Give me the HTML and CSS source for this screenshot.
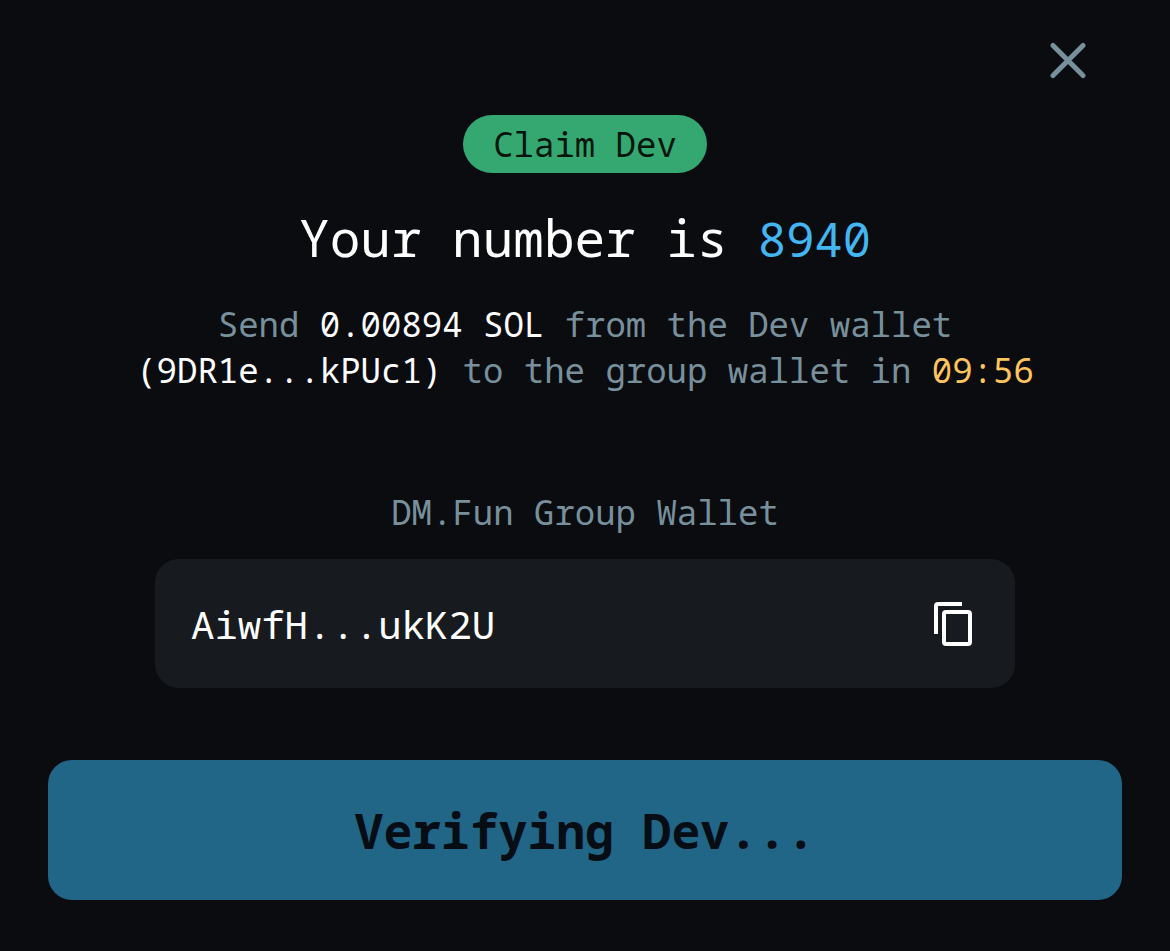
FILE: index.html
```html
<!DOCTYPE html>
<html lang="en">
<head>
  <meta charset="UTF-8">
  <meta name="viewport" content="width=device-width, initial-scale=1.0">
  <title>Claim Dev</title>
  <link rel="stylesheet" href="styles.css">
</head>
<body>

  <main class="modal">

    <!-- Close -->
    <header class="modal-header">
      <button type="button" class="icon-button" aria-label="Close">
        <svg class="close-icon" viewBox="0 0 38 38" fill="none" stroke="currentColor" stroke-width="5" stroke-linecap="round">
          <path d="M4 3.5 34 33.5M34 3.5 4 33.5"/>
        </svg>
      </button>
    </header>

    <!-- Claim info -->
    <section class="claim">
      <span class="badge">Claim Dev</span>
      <h1>Your number is <span class="number">8940</span></h1>
      <p class="instructions">
        Send <span class="strong">0.00894 SOL</span> from the Dev wallet
        <span class="strong">(9DR1e...kPUc1)</span> to the group wallet in <time class="timer">09:56</time>
      </p>
    </section>

    <!-- Group wallet -->
    <section class="wallet">
      <h2>DM.Fun Group Wallet</h2>
      <div class="wallet-box">
        <span class="address">AiwfH...ukK2U</span>
        <button type="button" class="icon-button copy" aria-label="Copy address">
          <svg class="copy-icon" viewBox="0 0 40 46" fill="none" stroke="currentColor" stroke-width="4">
            <path d="M3 33V5q0-2 2-2H29"/>
            <rect x="11" y="11" width="26" height="32" rx="2"/>
          </svg>
        </button>
      </div>
    </section>

    <button type="button" class="verify-button">Verifying Dev...</button>

  </main>

</body>
</html>
```

FILE: styles.css
```css
/* Reset & base */
* { margin: 0; padding: 0; box-sizing: border-box; }
body {
  background: #0a0c10;
  color: #fff;
  font-family: "Noto Sans Mono", "DejaVu Sans Mono", "Liberation Mono", monospace;
  font-size: 34px;
}
button { border: none; font-family: inherit; cursor: pointer; }
svg { display: block; }

/* Modal */
.modal {
  display: flex;
  flex-direction: column;
  padding: 42px 48px 50px;
}
.modal-header {
  display: flex;
  justify-content: flex-end;
  padding-right: 35px;
}
.icon-button { background: transparent; color: #78909c; }
.close-icon { width: 38px; height: 38px; }

/* Claim info */
.claim {
  display: flex;
  flex-direction: column;
  align-items: center;
  margin-top: 35px;
  text-align: center;
}
.badge {
  padding: 0 30px;
  border-radius: 29px;
  background: #35a872;
  color: #06150c;
  line-height: 58px;
}
h1 {
  margin-top: 29px;
  font-size: 51px;
  font-weight: 400;
  line-height: 70px;
}
.number { color: #43b5f0; font-size: 47px; }
.instructions {
  max-width: 910px;
  margin-top: 27px;
  color: #78909c;
  line-height: 46px;
}
.strong { color: #fff; }
.timer { color: #ffc55c; }

/* Group wallet */
.wallet { padding: 0 107px; margin-top: 96px; }
h2 {
  color: #78909c;
  font-size: 34px;
  font-weight: 400;
  line-height: 46px;
  text-align: center;
}
.wallet-box {
  display: flex;
  align-items: center;
  justify-content: space-between;
  height: 129px;
  margin-top: 24px;
  padding: 0 42px 0 36px;
  border-radius: 24px;
  background: #171a1e;
}
.address { font-size: 39px; }
.copy { color: #fff; }
.copy-icon { width: 40px; height: 46px; }

/* Verify button */
.verify-button {
  height: 140px;
  margin-top: 72px;
  border-radius: 24px;
  background: #216587;
  color: #060d14;
  font-size: 48px;
  font-weight: 700;
}

/* Mobile responsiveness */
@media (max-width: 700px) {
  .modal { padding: 24px; }
  .modal-header { padding-right: 0; }
  .wallet { padding: 0; }
}
```
